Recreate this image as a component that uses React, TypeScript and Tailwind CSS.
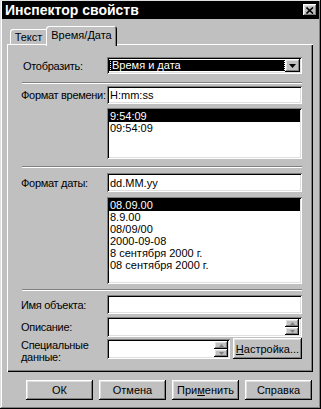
import React from 'react';

const raised =
  'shadow-[inset_-1px_-1px_#000,inset_1px_1px_#fff,inset_-2px_-2px_#808080,inset_2px_2px_#dfdfdf]';
const sunken =
  'shadow-[inset_1px_1px_#808080,inset_-1px_-1px_#fff,inset_2px_2px_#000,inset_-2px_-2px_#dfdfdf]';

function Arrow() {
  return (
    <svg width="7" height="4" viewBox="0 0 7 4">
      <polygon points="0,0 7,0 3.5,4" fill="#000" />
    </svg>
  );
}

function Spin() {
  return (
    <div className="flex flex-col w-[14px] h-full">
      <div className={`flex-1 bg-[#c0c0c0] flex items-center justify-center ${raised}`}>
        <svg width="5" height="3" viewBox="0 0 5 3">
          <polygon points="2.5,0 5,3 0,3" fill="#808080" />
        </svg>
      </div>
      <div className={`flex-1 bg-[#c0c0c0] flex items-center justify-center ${raised}`}>
        <svg width="5" height="3" viewBox="0 0 5 3">
          <polygon points="0,0 5,0 2.5,3" fill="#808080" />
        </svg>
      </div>
    </div>
  );
}

function Separator() {
  return <div className="ml-[1px] h-[2px] border-t border-b border-t-[#808080] border-b-white" />;
}

function Btn({ children }: { children: React.ReactNode }) {
  return (
    <div className={`w-[67px] h-[20px] bg-[#c0c0c0] flex items-center justify-center ${raised}`}>
      {children}
    </div>
  );
}

function Label({ children, className = '' }: { children: React.ReactNode; className?: string }) {
  return <div className={`w-[86px] shrink-0 whitespace-nowrap tracking-[-0.3px] ${className}`}>{children}</div>;
}

export default function App() {
  const dateFormats = ['08.09.00', '8.9.00', '08/09/00', '2000-09-08', '8 сентября 2000 г.', '08 сентября 2000 г.'];

  return (
    <div
      className={`w-[321px] h-[409px] bg-[#c0c0c0] px-[2px] pt-[1px] flex flex-col text-[11px] leading-[12px] text-black font-['Liberation_Sans',Arial,sans-serif] shadow-[inset_-1px_-1px_#000,inset_1px_1px_#dfdfdf,inset_-2px_-2px_#808080,inset_2px_2px_#fff]`}
    >
      {/* title bar */}
      <div className="h-[18px] bg-black flex items-center justify-between pl-[3px] pr-[2px]">
        <span className="text-white font-bold text-[14px] leading-[16px]">Инспектор свойств</span>
        <div className={`w-[14px] h-[12px] bg-[#c0c0c0] flex items-center justify-center ${raised}`}>
          <svg width="8" height="7" viewBox="0 0 8 7">
            <path d="M0.5 0.5 L7 6.5 M7 0.5 L0.5 6.5" stroke="#000" strokeWidth="1.6" />
          </svg>
        </div>
      </div>

      {/* tabs */}
      <div className="h-[25px] flex items-end pl-[8px]">
        <div className="w-[37px] h-[15px] rounded-tl-[3px] flex items-center justify-center shadow-[inset_1px_1px_#fff,inset_-1px_0_#808080]">
          Текст
        </div>
        <div className="relative z-10 w-[71px] h-[20px] -mb-[2px] -ml-[1px] bg-[#c0c0c0] rounded-t-[3px] flex items-start justify-center pt-[3px] shadow-[inset_1px_1px_#fff,inset_-1px_0_#000,inset_-2px_0_#808080]">
          Время/Дата
        </div>
      </div>

      {/* panel */}
      <div className="ml-[5px] w-[306px] h-[328px] pl-[14px] pr-[11px] pt-[13px] flex flex-col shadow-[inset_1px_1px_#fff,inset_-1px_-1px_#000,inset_-2px_-2px_#808080]">
        <div className="flex items-center h-[17px]">
          <Label className="pl-[2px]">Отобразить:</Label>
          <div className={`flex-1 h-full bg-white flex items-stretch p-[2px] ${sunken}`}>
            <div className="flex-1 bg-black text-white flex items-center pl-[2px] my-[1px]">
              <span className="outline outline-1 outline-dotted outline-white px-[1px] leading-[11px] w-full mr-[1px]">
                Время и дата
              </span>
            </div>
            <div className={`w-[15px] bg-[#c0c0c0] flex items-center justify-center ${raised}`}>
              <Arrow />
            </div>
          </div>
        </div>

        <div className="mt-[8px]">
          <Separator />
        </div>

        <div className="flex items-center h-[18px] mt-[2px]">
          <Label>Формат времени:</Label>
          <div className={`flex-1 h-full bg-white flex items-center pl-[3px] ${sunken}`}>H:mm:ss</div>
        </div>

        <div className="flex mt-[4px] h-[51px]">
          <div className="w-[86px]" />
          <div className={`flex-1 h-full bg-white p-[2px] ${sunken}`}>
            <div className="bg-black text-white pl-[1px] h-[12px] flex items-center">9:54:09</div>
            <div className="pl-[1px] h-[12px] flex items-center">09:54:09</div>
          </div>
        </div>

        <div className="mt-[7px]">
          <Separator />
        </div>

        <div className="flex items-center h-[19px] mt-[5px]">
          <Label>Формат даты:</Label>
          <div className={`flex-1 h-full bg-white flex items-center pl-[3px] ${sunken}`}>dd.MM.yy</div>
        </div>

        <div className="flex mt-[5px] h-[87px]">
          <div className="w-[86px]" />
          <div className={`flex-1 h-full bg-white p-[2px] ${sunken}`}>
            {dateFormats.map((f, i) => (
              <div
                key={f}
                className={`pl-[1px] h-[12px] flex items-center ${i === 0 ? 'bg-black text-white' : ''}`}
              >
                {f}
              </div>
            ))}
          </div>
        </div>

        <div className="mt-[5px]">
          <Separator />
        </div>

        <div className="flex items-center h-[19px] mt-[4px]">
          <Label>Имя объекта:</Label>
          <div className={`flex-1 h-full bg-white ${sunken}`} />
        </div>

        <div className="flex items-center h-[20px] mt-[3px]">
          <Label>Описание:</Label>
          <div className={`flex-1 h-full bg-white flex justify-end py-[2px] pr-[3px] ${sunken}`}>
            <Spin />
          </div>
        </div>

        <div className="flex items-start h-[20px] mt-[2px]">
          <Label className="leading-[12px]">
            Специальные
            <br />
            данные:
          </Label>
          <div className={`w-[123px] h-full bg-white flex justify-end py-[2px] pr-[2px] ${sunken}`}>
            <Spin />
          </div>
          <div className={`ml-[3px] flex-1 h-[21px] -mt-[1px] bg-[#c0c0c0] flex items-center justify-center ${raised}`}>
            <span>
              <span className="underline">Н</span>астройка...
            </span>
          </div>
        </div>
      </div>

      {/* buttons */}
      <div className="flex gap-[6px] pl-[24px] mt-[8px]">
        <Btn>ОК</Btn>
        <Btn>Отмена</Btn>
        <Btn>
          <span>
            При<span className="underline">м</span>енить
          </span>
        </Btn>
        <Btn>Справка</Btn>
      </div>
    </div>
  );
}
